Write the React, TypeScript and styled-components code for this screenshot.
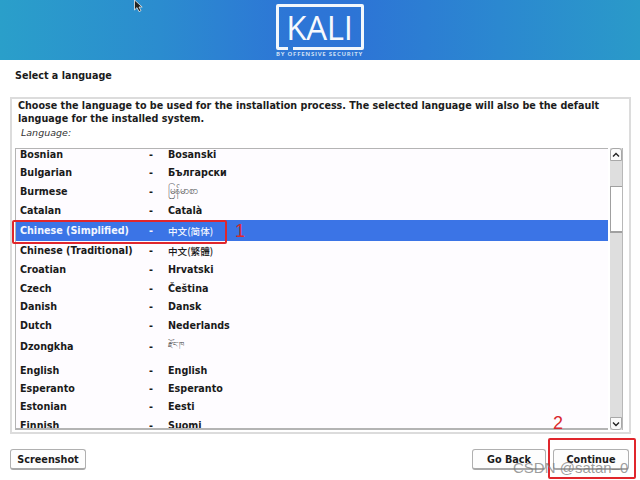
import React from "react";
import styled, { createGlobalStyle } from "styled-components";

const Global = createGlobalStyle`
  html, body { margin: 0; padding: 0; background: #fff; }
  body { font-family: "DejaVu Sans", sans-serif; }
`;

const Page = styled.div`
  position: relative;
  width: 640px;
  height: 480px;
  overflow: hidden;
  background: #fff;
  display: flex;
  flex-direction: column;
  color: #111;
`;

const Header = styled.header`
  height: 60px;
  flex: none;
  display: flex;
  justify-content: center;
  background: linear-gradient(90deg, #2a9fca 0%, #2b8ccf 25%, #2d76d6 45%, #2d74d6 55%, #2b88d0 78%, #2a9ac9 100%);
`;

const Logo = styled.div`
  width: 88px;
  margin-left: -1px;
  padding-top: 4px;
  display: flex;
  flex-direction: column;
  align-items: center;
`;

const LogoBox = styled.div`
  position: relative;
  box-sizing: border-box;
  width: 88px;
  height: 46px;
  border: 3px solid #f2f7fc;
  border-radius: 2px;
  display: flex;
  align-items: center;
  justify-content: center;
  font-family: "Open Sans", sans-serif;
  font-weight: 400;
  font-size: 33px;
  line-height: 1;
  color: #f6f9fd;
  letter-spacing: -0.3px;
`;

const LogoNotch = styled.span`
  position: absolute;
  left: 9px;
  bottom: -3px;
  width: 5px;
  height: 3px;
  background: #2d79d4;
`;

const LogoTag = styled.div`
  margin-top: 0;
  font-family: "Open Sans", sans-serif;
  font-size: 6px;
  line-height: 9px;
  font-weight: 700;
  letter-spacing: 0.75px;
  white-space: nowrap;
  color: #c9def3;
`;

const Cursor = styled.svg`
  position: absolute;
  left: 133px;
  top: -1px;
`;

const Title = styled.h1`
  margin: 0;
  padding: 9px 0 0 15px;
  height: 28px;
  box-sizing: content-box;
  font-size: 9.6px;
  line-height: 13px;
  font-weight: 700;
  color: #1a1a1a;
`;

const Panel = styled.section`
  box-sizing: border-box;
  margin: 0 9px 0 10px;
  width: 621px;
  height: 337px;
  border: 2px solid #dcdcdc;
  padding: 1px 6px 2px 3px;
  display: flex;
  flex-direction: column;
`;

const Intro = styled.p`
  margin: 0 0 0 3px;
  font-size: 9.6px;
  line-height: 12.5px;
  font-weight: 700;
  color: #1c1c1c;
  white-space: nowrap;
`;

const FieldLabel = styled.div`
  margin: 2px 0 9px 6px;
  font-size: 9.5px;
  line-height: 12px;
  font-style: oblique;
  color: #333;
`;

const ListWrap = styled.div`
  flex: 1;
  min-height: 0;
  display: flex;
`;

const List = styled.div`
  flex: 1;
  min-width: 0;
  border: 1px solid #b4b4b4;
  border-width: 1px 0 2px 1px;
  overflow: hidden;
  background: #fefcff;
`;

const Rows = styled.div`
  margin-top: -4px;
`;

const Row = styled.div<{ $h: number; $selected?: boolean; $lift?: number }>`
  box-sizing: border-box;
  height: ${(p) => p.$h}px;
  padding-bottom: ${(p) => p.$lift ?? 0}px;
  display: grid;
  grid-template-columns: 129px 19px 1fr;
  align-items: center;
  padding-left: 4px;
  font-size: 9.6px;
  font-weight: 700;
  white-space: nowrap;
  color: ${(p) => (p.$selected ? "#f2f6ff" : "#1a1a1a")};
  background: ${(p) => (p.$selected ? "#3b74e6" : "transparent")};
`;

const Native = styled.span`
  font-family: "DejaVu Sans", "Noto Sans CJK SC", sans-serif;
`;

const Small = styled.span`
  font-family: "Noto Sans CJK SC", sans-serif;
  font-size: 9.6px;
  font-weight: 500;
`;

const Glyphs = styled.span<{ $size: number }>`
  font-weight: 400;
  font-size: ${(p) => p.$size}px;
  color: #555;
  font-family: "DejaVu Sans", sans-serif;
`;

const Scrollbar = styled.div`
  flex: none;
  width: 12px;
  margin-left: 2px;
  display: flex;
  flex-direction: column;
  background: #dedede;
  border-right: 1px solid #b8b8b8;
`;

const Arrow = styled.div<{ $down?: boolean }>`
  box-sizing: border-box;
  height: 13px;
  flex: none;
  background: #fafafa;
  border: 1px solid #a8a8a8;
  border-radius: ${(p) => (p.$down ? "0 0 3px 3px" : "3px 3px 0 0")};
  display: flex;
  align-items: center;
  justify-content: center;
`;

const Track = styled.div`
  flex: 1;
  padding-top: 25px;
`;

const Thumb = styled.div`
  box-sizing: border-box;
  height: 47px;
  background: #fff;
  border: 1px solid #a0a0a0;
  border-width: 1px 0 2px 1px;
`;

const Footer = styled.footer`
  display: flex;
  align-items: flex-start;
  padding: 15px 11px 0 10px;
  gap: 7px;
`;

const Button = styled.button<{ $w: number }>`
  box-sizing: border-box;
  height: 21px;
  width: ${(p) => p.$w}px;
  padding: 0;
  background: #fdfdfd;
  border: 1px solid #b0b0b0;
  border-bottom: 2px solid #a8a8a8;
  border-radius: 3px;
  font-family: "DejaVu Sans", sans-serif;
  font-size: 9.7px;
  font-weight: 700;
  color: #1a1a1a;
`;

const Spacer = styled.div`
  flex: 1;
`;

const Marker = styled.div<{ $x: number; $y: number; $w: number; $h: number }>`
  position: absolute;
  box-sizing: border-box;
  left: ${(p) => p.$x}px;
  top: ${(p) => p.$y}px;
  width: ${(p) => p.$w}px;
  height: ${(p) => p.$h}px;
  border: 2px solid #e0262c;
  border-radius: 2px;
`;

const Num = styled.div<{ $x: number; $y: number }>`
  position: absolute;
  left: ${(p) => p.$x}px;
  top: ${(p) => p.$y}px;
  font-family: "Liberation Sans", sans-serif;
  font-size: 18px;
  line-height: 18px;
  color: #d9282e;
`;

const Watermark = styled.div`
  position: absolute;
  left: 513px;
  top: 459px;
  font-family: "Liberation Sans", sans-serif;
  font-size: 15px;
  line-height: 17px;
  white-space: nowrap;
  color: rgba(120, 120, 120, 0.72);
`;

const rows: { n: string; v: React.ReactNode; h: number; s?: boolean; lift?: number }[] = [
  { n: "Bosnian", v: "Bosanski", h: 18 },
  { n: "Bulgarian", v: "Български", h: 18 },
  { n: "Burmese", v: <Glyphs $size={10}>မြန်မာစာ</Glyphs>, h: 20 },
  { n: "Catalan", v: "Català", h: 19 },
  { n: "Chinese (Simplified)", v: <Small>中文(简体)</Small>, h: 21, s: true },
  { n: "Chinese (Traditional)", v: <Small>中文(繁體)</Small>, h: 19 },
  { n: "Croatian", v: "Hrvatski", h: 19 },
  { n: "Czech", v: "Čeština", h: 18 },
  { n: "Danish", v: "Dansk", h: 19 },
  { n: "Dutch", v: "Nederlands", h: 18 },
  { n: "Dzongkha", v: <Glyphs $size={7.5}>རྫོང་ཁ</Glyphs>, h: 27, lift: 3 },
  { n: "English", v: "English", h: 18 },
  { n: "Esperanto", v: "Esperanto", h: 18 },
  { n: "Estonian", v: "Eesti", h: 19 },
  { n: "Finnish", v: "Suomi", h: 18 },
];

export default function App() {
  return (
    <Page>
      <Global />
      <Header>
        <Logo>
          <LogoBox>
            KALI
            <LogoNotch />
          </LogoBox>
          <LogoTag>BY OFFENSIVE SECURITY</LogoTag>
        </Logo>
      </Header>
      <Cursor width="12" height="14" viewBox="0 0 12 14">
        <path d="M1.5 1 L1.5 11 L4 8.6 L6 12.6 L8 11.6 L6 8 L9.2 8 Z" fill="#222" stroke="#eee" strokeWidth="0.8" />
      </Cursor>
      <Title>Select a language</Title>
      <Panel>
        <Intro>
          Choose the language to be used for the installation process. The selected language will also be the default
          <br />
          language for the installed system.
        </Intro>
        <FieldLabel>Language:</FieldLabel>
        <ListWrap>
          <List>
            <Rows>
              {rows.map((r) => (
                <Row key={r.n} $h={r.h} $selected={r.s} $lift={r.lift}>
                  <span>{r.n}</span>
                  <span>-</span>
                  <Native>{r.v}</Native>
                </Row>
              ))}
            </Rows>
          </List>
          <Scrollbar>
            <Arrow>
              <svg width="8" height="6" viewBox="0 0 8 6">
                <path d="M1 4.5 L4 1.5 L7 4.5" fill="none" stroke="#222" strokeWidth="1.4" />
              </svg>
            </Arrow>
            <Track>
              <Thumb />
            </Track>
            <Arrow $down>
              <svg width="8" height="6" viewBox="0 0 8 6">
                <path d="M1 1.5 L4 4.5 L7 1.5" fill="none" stroke="#222" strokeWidth="1.4" />
              </svg>
            </Arrow>
          </Scrollbar>
        </ListWrap>
      </Panel>
      <Footer>
        <Button $w={76}>Screenshot</Button>
        <Spacer />
        <Button $w={74}>Go Back</Button>
        <Button $w={76}>Continue</Button>
      </Footer>
      <Marker $x={12} $y={220} $w={215} $h={24} />
      <Num $x={235} $y={222}>1</Num>
      <Marker $x={548} $y={438} $w={88} $h={41} />
      <Num $x={553} $y={414}>2</Num>
      <Watermark>CSDN @satan–0</Watermark>
    </Page>
  );
}
